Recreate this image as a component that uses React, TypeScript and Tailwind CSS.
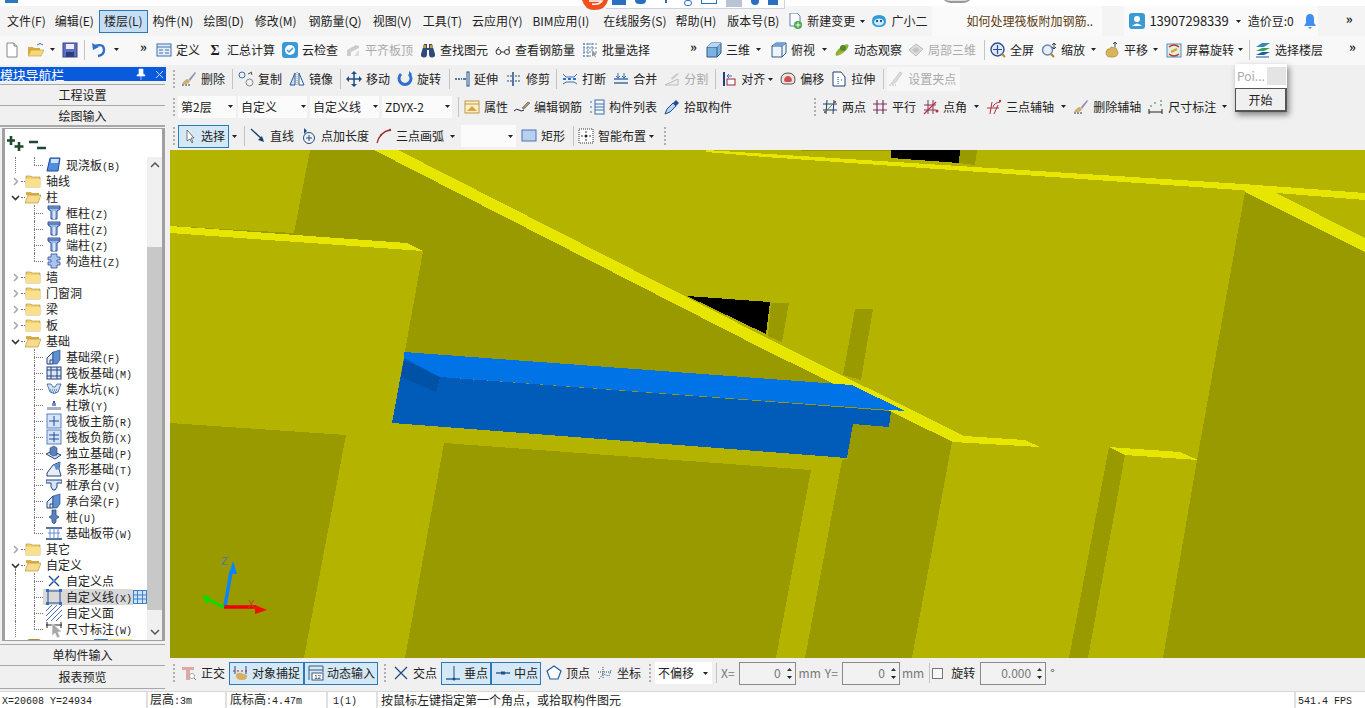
import React from 'react';
import clsx from 'clsx';

const Ic = ({ children }: { children: React.ReactNode }) => (
  <svg width="16" height="16" viewBox="0 0 16 16" className="shrink-0 block">{children}</svg>
);

// toolbar icons
const doc = <Ic><path d="M3 1h7l3 3v11H3z" fill="#fff" stroke="#888" /><path d="M10 1v3h3" fill="#ddd" stroke="#888" /></Ic>;
const openF = <Ic><path d="M0 5h5l1 1h6v8H0z" fill="#d9a93c" /><path d="M3 8h13l-3 6H0z" fill="#f4d77a" stroke="#c39a35" strokeWidth=".6" /><path d="M9 3q3-3 6 0" stroke="#3a6fb0" fill="none" /></Ic>;
const save = <Ic><rect x="1" y="1" width="14" height="14" fill="#5c6fc0" stroke="#3a4790" /><rect x="4" y="2" width="8" height="5" fill="#eef" /><rect x="4" y="10" width="8" height="5" fill="#2e3a80" /></Ic>;
const undo = <Ic><path d="M4 4q9-3 9 4 0 5-6 6" stroke="#2f6fc8" strokeWidth="2.4" fill="none" /><path d="M1 1l1 7 6-3z" fill="#2f6fc8" /></Ic>;
const tableI = <Ic><rect x="1" y="2" width="14" height="12" fill="#e4eefa" stroke="#3b6ea8" /><path d="M1 5h14M3 8h4M3 11h4M9 8h4M9 11h4" stroke="#3b6ea8" /></Ic>;
const sigma = <Ic><text x="8" y="13" textAnchor="middle" fontSize="14" fontWeight="700" fontFamily="Liberation Serif, serif" fill="#222">Σ</text></Ic>;
const cloudCheck = <Ic><rect width="16" height="16" rx="3" fill="#3a9ad9" /><circle cx="8" cy="8" r="5" fill="#fff" /><path d="M5 8l2 2 4-4" stroke="#3a9ad9" strokeWidth="1.5" fill="none" /></Ic>;
const alignG = <Ic><path d="M2 14V8l9-5 3 1v2l-8 4v4z" fill="#ccc" /><path d="M9 14h5V8z" fill="#ddd" /></Ic>;
const binoc = <Ic><path d="M4 2h3v4h2V2h3l3 10a3 3 0 0 1-6 1V8H7v5a3 3 0 0 1-6-1z" fill="#314a7a" /><path d="M4 3h2v3H3z" fill="#c89a3a" /><path d="M10 3h2l1 3h-3z" fill="#c89a3a" /></Ic>;
const glasses = <Ic><circle cx="3.5" cy="10" r="2.5" fill="none" stroke="#333" /><circle cx="12" cy="10" r="2.5" fill="none" stroke="#333" /><path d="M6 10h3.500M1 9l3-4M14 9l0-5" stroke="#333" /></Ic>;
const batch = <Ic><path d="M1 1h14v14H1z" fill="#fff" /><path d="M1 2h14M1 6h14M1 10h14M1 14h8M2 1v14M6 1v14M10 1v8" stroke="#567ca8" strokeDasharray="2 1" /><path d="M10 9l5 3-2 1 1 2-1 .5-1-2-2 1z" fill="#999" /></Ic>;
const cube = <Ic><path d="M1 5l4-4h10v10l-4 4H1z" fill="#7db2e0" stroke="#2d5d8c" /><path d="M1 5h10v10M11 5l4-4" stroke="#2d5d8c" fill="none" /><path d="M1 5l4-4h10l-4 4z" fill="#b8d6f0" /></Ic>;
const cubeT = <Ic><path d="M1 4l4-3h10v10l-4 4H1z" fill="#eef4fa" stroke="#2d5d8c" /><path d="M1 4h10v11M11 4l4-3" stroke="#2d5d8c" fill="none" /><path d="M1 4l4-3h10l-4 3z" fill="#6da5d8" /></Ic>;
const orbit = <Ic><ellipse cx="8" cy="8" rx="8" ry="3" transform="rotate(-40 8 8)" fill="#7fb43a" /><path d="M4 12q6 0 8-9" stroke="#e0a030" strokeWidth="1.500" fill="none" /><circle cx="9" cy="6" r="3" fill="#4d8a2a" /></Ic>;
const cubeG = <Ic><path d="M1 8l7-6 7 5-7 7z" fill="#ddd" stroke="#bbb" /><path d="M4 8l4-3 4 3-4 3z" fill="#c4c4c4" /></Ic>;
const full = <Ic><circle cx="7.500" cy="7.500" r="6.500" fill="#dfe9f8" stroke="#2f4f90" strokeWidth="1.400" /><path d="M7.500 3v9M3 7.500h9" stroke="#2f4f90" strokeWidth="1.200" /><path d="M12 12l3 3" stroke="#b98a2a" strokeWidth="2" /></Ic>;
const zoomI = <Ic><circle cx="6.500" cy="8" r="5" fill="#e6eefa" stroke="#6a86b0" strokeWidth="1.500" /><path d="M10 12l3 3" stroke="#a8862a" strokeWidth="2" /><path d="M13 1v5M11 3l2-2 2 2M11 5l2 2 2-2" stroke="#345" fill="none" /></Ic>;
const pan = <Ic><path d="M2 10q1-4 4-3l1-2 5 1 2 4q0 5-5 5H6q-4 0-4-5z" fill="#d9b45c" stroke="#9a7a2a" strokeWidth=".6" /><path d="M11 0v5M9 2l2-2 2 2" stroke="#345" fill="none" /></Ic>;
const rotS = <Ic><rect x="1" y="2" width="14" height="13" fill="#dff0e0" stroke="#4a8fc0" /><path d="M3 5q5-4 10 0" stroke="#c83030" strokeWidth="1.500" fill="none" /><path d="M3 12q5 4 10 0" stroke="#c83030" strokeWidth="1.500" fill="none" /><path d="M5 10l6-3" stroke="#d8a030" strokeWidth="2" /></Ic>;
const layersI = <Ic><path d="M1 5l6-4h8L9 5z" fill="#2f8fb0" /><path d="M1 9l6-3h8L9 9z" fill="#3ca05a" /><path d="M1 13l6-3h8l-6 3z" fill="#1f5f9f" /><path d="M1 15h13" stroke="#1f5f9f" /></Ic>;
const newDoc = <Ic><path d="M3 0h7l3 3v10H3z" fill="#fff" stroke="#5a7fb0" /><circle cx="11" cy="12" r="4" fill="#4aa84a" /><path d="M11 9.500v5M8.500 12h5" stroke="#fff" /></Ic>;
const robot = <Ic><path d="M1 8q0-6 7-6t7 6q0 6-7 6T1 8z" fill="#2e9ad8" /><ellipse cx="8" cy="9" rx="5" ry="3.500" fill="#c8ecfa" /><circle cx="6" cy="8" r="1" fill="#124" /><circle cx="10" cy="8" r="1" fill="#124" /></Ic>;
const userI = <Ic><rect width="16" height="16" rx="3" fill="#3b9ad0" /><circle cx="8" cy="6" r="3" fill="#fff" /><path d="M3 13q5-5 10 0z" fill="#fff" /></Ic>;
const bell = <Ic><path d="M8 1q4 0 4 5v4l2 3H2l2-3V6q0-5 4-5z" fill="#3f8fee" /><path d="M6 14h4l-2 2z" fill="#3f8fee" /></Ic>;

const brush = <Ic><path d="M1 14h9" stroke="#334" strokeDasharray="2 1" /><path d="M1 13q3-5 6-5l2 2q-2 4-8 3z" fill="#c8b070" /><path d="M8 8l6-7 1 1-6 8z" fill="#9a8ab0" /></Ic>;
const copyI = <Ic><circle cx="4" cy="4" r="3" fill="none" stroke="#3c6ea8" /><circle cx="11.500" cy="11.500" r="3.500" fill="none" stroke="#888" /><path d="M10 3l4-2M13 1l1 3" stroke="#555" fill="none" /></Ic>;
const mirrorI = <Ic><path d="M6 2v12H1z" fill="#cfe0f2" stroke="#1f5a96" /><path d="M10 2v12h5z" fill="#fff" stroke="#1f5a96" /><path d="M8 1v14" stroke="#888" strokeDasharray="1 1" /></Ic>;
const moveI = <Ic><path d="M8 1v14M1 8h14" stroke="#1f4e86" strokeWidth="1.500" /><path d="M8 0l-3 3h6zM8 16l-3-3h6zM0 8l3-3v6zM16 8l-3-3v6z" fill="#1f4e86" /></Ic>;
const rotI = <Ic><path d="M4 3a6 6 0 1 0 8 0" stroke="#2f6fc8" strokeWidth="3" fill="none" /><path d="M12 0v6l3-3z" fill="#2f6fc8" /></Ic>;
const extend = <Ic><path d="M1 8h7" stroke="#1f4e86" strokeDasharray="2 1" strokeWidth="1.500" /><path d="M9 8h3" stroke="#1f4e86" strokeWidth="1.500" /><rect x="13" y="1" width="2" height="14" fill="#fff" stroke="#1f4e86" /></Ic>;
const trim = <Ic><path d="M1 5h5M1 10h5M9 5h5M9 10h5" stroke="#1f4e86" strokeDasharray="2 1" /><path d="M7 1v14" stroke="#1f4e86" strokeWidth="1.500" /></Ic>;
const breakI = <Ic><path d="M1 3l3 3h8l3-3M1 13l3-2h8l3 2" stroke="#3c6ea8" fill="none" /><path d="M1 8h14" stroke="#2f6fc8" strokeDasharray="3 2" strokeWidth="2" /></Ic>;
const mergeI = <Ic><path d="M5 2v4M11 2v4" stroke="#3c6ea8" /><path d="M1 8h14M1 12h14" stroke="#3c6ea8" strokeWidth="1.500" /><path d="M3 5l2 2 2-2M9 5l2 2 2-2" stroke="#3c6ea8" fill="none" /></Ic>;
const splitI = <Ic><path d="M1 14l13-6v6z" fill="#eee" stroke="#bbb" /><path d="M7 7l6-5 2 1-7 6z" fill="#ccc" /></Ic>;
const alignI = <Ic><rect x="2" y="1" width="2" height="14" fill="#1f3f80" /><rect x="6" y="8" width="8" height="6" fill="#fff" stroke="#a02040" /><path d="M11 5H6M8 3L6 5l2 2" stroke="#2f6fc8" fill="none" /></Ic>;
const offsetI = <Ic><path d="M8 2q7 0 7 7 0 4-3 4H4q-3 0-3-4 0-7 7-7z" fill="#f0e0e0" stroke="#555" /><path d="M4 9q1-4 4-4t4 4q0 2-2 2H6q-2 0-2-2z" fill="#d05050" /></Ic>;
const stretch = <Ic><path d="M2 1h8l4 5v9H2z" fill="#fff" stroke="#1f3f70" /><path d="M7 6v7M10 9h2" stroke="#1f3f70" strokeDasharray="1 1" /></Ic>;
const gripG = <Ic><path d="M1 14h7" stroke="#bbb" strokeDasharray="2 1" /><path d="M3 13l3-4 6-8 2 1-6 9z" fill="#ddd" stroke="#ccc" /></Ic>;

const propI = <Ic><rect x="1" y="2" width="14" height="12" fill="#fbeecb" stroke="#c09840" /><path d="M1 5h14" stroke="#c09840" /><path d="M3 12l5-5 5 5z" fill="#e0a040" /></Ic>;
const editBar = <Ic><path d="M0 12q3-3 5-1t5 0" stroke="#223" fill="none" /><path d="M8 9l6-6 2 1-6 6z" fill="#a89470" stroke="#443" strokeWidth=".5" /></Ic>;
const listI = <Ic><rect x="6" y="1" width="9" height="14" fill="#f4f8fc" stroke="#3c6ea8" /><path d="M6 5h9M6 8h9M6 11h9M1 3h2M1 8h2M1 13h2" stroke="#3c6ea8" /></Ic>;
const pick = <Ic><path d="M1 15l2-5 6-6 3 3-6 6z" fill="#b8d4f4" stroke="#1f4e96" /><path d="M9 4l3-3 3 3-3 3z" fill="#1f4e96" /></Ic>;
const twoPt = <Ic><path d="M1 5h14M1 11h14M5 1l-1 14M12 1l-1 14" stroke="#1f3f70" /><path d="M2 14L14 2" stroke="#6a8a30" /><circle cx="3" cy="13" r="1" fill="#c03030" /><circle cx="13" cy="3" r="1" fill="#c03030" /></Ic>;
const parallel = <Ic><path d="M1 5h14M1 11h14M5 1v14M11 1v14" stroke="#803060" strokeWidth="1.200" /></Ic>;
const ptAngle = <Ic><path d="M1 6h12M1 11h12M5 1v14M10 1v14" stroke="#803060" /><path d="M1 15L13 3" stroke="#c03040" strokeWidth="1.300" /><circle cx="14" cy="12" r="1.500" fill="#c03030" /></Ic>;
const threeAx = <Ic><path d="M1 9h12M6 3l-2 12M12 6l-4 9" stroke="#b03040" /><path d="M7 8q1-4 7-5" stroke="#b03040" fill="none" /><circle cx="14" cy="2" r="1.200" fill="#c03030" /></Ic>;
const dim = <Ic><path d="M1 10v5M14 10v5M1 13h13" stroke="#222" /><path d="M2 7h2M12 2h2M12 6h2M6 4h2" stroke="#3a8040" strokeDasharray="2 1" /></Ic>;

const cursorI = <Ic><path d="M5 2v11l3-2 2 4 1-1-2-4h3z" fill="#fff" stroke="#777" /></Ic>;
const lineI = <Ic><path d="M1 1l12 11" stroke="#1f3f70" strokeWidth="1.300" /><path d="M14 14l-6-2 4-4z" fill="#1f3f70" /></Ic>;
const ptLen = <Ic><circle cx="8" cy="10" r="5.500" fill="none" stroke="#1f4e86" /><path d="M8 7v6M5 10h6" stroke="#1f4e86" /><path d="M3 0v6l3-3z" fill="#1f4e86" /></Ic>;
const arcI = <Ic><path d="M1 15Q4 4 14 2" stroke="#a03030" strokeWidth="1.300" fill="none" /><circle cx="14" cy="2" r="1.200" fill="#a03030" /><circle cx="5" cy="7" r="1" fill="#a03030" /></Ic>;
const rectI = <Ic><rect x="1" y="2" width="14" height="11" fill="#b8d0f0" stroke="#4a74b0" /></Ic>;
const smart = <Ic><rect x="1" y="1" width="14" height="14" fill="#fff" stroke="#333" strokeDasharray="1 1" /><path d="M3 8h10M8 3v10" stroke="#345" strokeDasharray="2 2" /><circle cx="8" cy="8" r="1.500" fill="#222" /></Ic>;

const ortho = <Ic><path d="M1 2h12v3H9v10H5V5H1z" fill="#dca8a8" /><circle cx="11" cy="11" r="2.500" fill="#fff" stroke="#aaa" /><path d="M13 13l2 2" stroke="#888" /></Ic>;
const snap = <Ic><path d="M2 1v8M13 1v8" stroke="#1f4e86" /><path d="M0 6h15" stroke="#a03030" strokeDasharray="2 2" /><path d="M3 11q0-4 5-3l6 2q1 5-5 5t-6-4z" fill="#d8b060" /></Ic>;
const dynI = <Ic><path d="M1 1h14M1 5h14M1 1v14M15 1v6" stroke="#3a5a80" fill="none" /><rect x="4" y="8" width="11" height="7" fill="#fff" stroke="#3a5a80" /><text x="9.500" y="14" textAnchor="middle" fontSize="6" fontFamily="Liberation Sans, sans-serif" fill="#223">12</text></Ic>;
const crossI = <Ic><path d="M2 2l12 12M14 2L2 14" stroke="#1f4e86" strokeWidth="1.300" /></Ic>;
const perp = <Ic><path d="M1 14h14" stroke="#1f4e86" strokeWidth="1.300" /><path d="M9 1v12" stroke="#1f4e86" /><circle cx="9" cy="14" r="1.500" fill="#1f4e86" /></Ic>;
const mid = <Ic><path d="M1 8h14" stroke="#1f4e86" strokeWidth="1.300" /><rect x="6" y="6.500" width="4" height="3" fill="#1f4e86" /></Ic>;
const vertexI = <Ic><path d="M8 1l7 5-3 8H4L1 6z" fill="#fff" stroke="#2060a0" strokeWidth="1.200" /></Ic>;
const coordI = <Ic><path d="M2 14l4-5 6 2 2-6" stroke="#3a8aa0" strokeDasharray="1.500 1" fill="none" /><path d="M6 2v12M1 7h14" stroke="#345" strokeDasharray="1 1" /></Ic>;

// tree icons
const folder = <Ic><path d="M1 3h5l1 1h8v10H1z" fill="#f2d069" stroke="#a98a35" strokeWidth=".6" /><path d="M1 6h14v8H1z" fill="#f9e08c" /></Ic>;
const folderO = <Ic><path d="M1 3h5l1 1h7v2H1z" fill="#d9ae4a" /><path d="M3 6h13l-3 8H0z" fill="#f6dc88" stroke="#a98a35" strokeWidth=".6" /></Ic>;
const slab = <Ic><path d="M4 1h10l-2 13H1z" fill="#4f8ee0" stroke="#204a90" /><path d="M5 2h8l-1 4H5z" fill="#cfe2fa" /></Ic>;
const colT = <Ic><path d="M2 1h12v3l-3 2v8H5V6L2 4z" fill="#9cb8ea" stroke="#2a4f96" /><path d="M2 3h12" stroke="#2a4f96" /><path d="M7 6h2v8H7z" fill="#dbe6fa" /></Ic>;
const colS = <Ic><path d="M5 1h6v3h3v3h-3v2h3v3h-3v3H5v-3H2V9h3V7H2V4h3z" fill="#a9c2ee" stroke="#2a4f96" strokeWidth=".8" /></Ic>;
const beamI = <Ic><path d="M1 15V9l6-6v12z" fill="#e0e8f6" stroke="#23447f" /><path d="M7 3l7-2v10l-3 4H7z" fill="#5e8fd0" stroke="#23447f" strokeWidth=".6" /><path d="M4 15v-4h3" stroke="#23447f" fill="none" /></Ic>;
const raftI = <Ic><rect x="1" y="2" width="14" height="12" fill="#dbe6f8" stroke="#23447f" /><path d="M1 5h14M1 11h14M5 2v12M11 2v12" stroke="#23447f" /></Ic>;
const pit = <Ic><path d="M1 3h4l2 3h2l2-3h4l-3 8q-4 3-8 0z" fill="#cfe2f6" stroke="#335a92" strokeWidth=".8" /><path d="M4 9h8M5 11h6" stroke="#335a92" strokeDasharray="1 1" /></Ic>;
const pier = <Ic><path d="M6 6h4v3H6z" fill="#6f8fc8" /><path d="M7 4h2v2H7z" fill="#335a92" /><rect x="1" y="10" width="14" height="3" fill="#aab0c0" /></Ic>;
const rebarP = <Ic><rect x="1" y="1" width="14" height="14" fill="#d4e4fa" stroke="#5a82c0" /><path d="M8 3v10M3 8h10" stroke="#234a90" /></Ic>;
const rebarN = <Ic><rect x="1" y="1" width="14" height="14" fill="#d4e4fa" stroke="#5a82c0" /><path d="M3 6h10M8 3v10M3 10h10" stroke="#234a90" /></Ic>;
const isoI = <Ic><path d="M0 9l6-3 9 4-6 4z" fill="#d0def4" stroke="#23447f" /><path d="M4 3l4-2 3 2v7l-4 1-3-2z" fill="#5e80ba" stroke="#23447f" strokeWidth=".6" /></Ic>;
const stripI = <Ic><path d="M1 15v-3l6-8 7-3-1 7 2 7z" fill="#e8eef8" stroke="#23447f" /><path d="M8 4l6-3-1 7-3 1z" fill="#5e8fd0" /></Ic>;
const capI = <Ic><path d="M0 3h16v3H11v4l-2 3H7l-2-3V6H0z" fill="#d6e2f6" stroke="#23447f" /></Ic>;
const pile = <Ic><path d="M6 1h4v5l3 2-3 2v3l-2 2-2-2v-3L3 8l3-2z" fill="#5e80ba" stroke="#23447f" strokeWidth=".7" /></Ic>;
const band = <Ic><path d="M0 3h16M0 14h16" stroke="#23447f" strokeWidth="1.500" /><path d="M4 3v11M8 3v11M12 3v11M2 8h12" stroke="#5e8fd0" /></Ic>;
const ptX = <Ic><path d="M3 3l10 10M13 3L3 13" stroke="#23447f" strokeWidth="1.400" /><circle cx="8" cy="8" r="1.500" fill="#4a8fe0" /></Ic>;
const lineSq = <Ic><rect x="2" y="2" width="12" height="12" fill="none" stroke="#234a90" /><path d="M0 0h3v3H0zM13 0h3v3h-3zM0 13h3v3H0zM13 13h3v3h-3z" fill="#2f6fc8" /></Ic>;
const hatch = <Ic><path d="M0 6L6 0M0 11L11 0M0 16L16 0M5 16L16 5M10 16l6-6" stroke="#4a6fa8" /></Ic>;
const dimT = <Ic><path d="M0 4h16M1 1v6M15 1v6" stroke="#222" /></Ic>;

const Caret = ({ className }: { className?: string }) => (
  <svg width="5" height="3" viewBox="0 0 5 3" className={clsx('shrink-0 block', className)}><path d="M0 0h5L2.500 3z" fill="#222" /></svg>
);
const Sep = ({ className }: { className?: string }) => <div className={clsx('w-px h-[20px] shrink-0 bg-[#c4c4c4]', className)} />;
const Grip = ({ className }: { className?: string }) => <div className={clsx('w-[2px] h-[18px] shrink-0 border-l-2 border-dotted border-[#b0b0b0]', className)} />;
const More = ({ className }: { className?: string }) => <span className={clsx('text-[13px] font-bold leading-none -mt-[6px] shrink-0 text-[#222]', className)}>»</span>;

function T({ icon, label, className, gray }: { icon: React.ReactNode; label: string; className?: string; gray?: boolean }) {
  return (
    <div className={clsx('flex items-center shrink-0', className)}>
      {icon}
      <span className={clsx('ml-1 whitespace-nowrap', gray ? 'text-[#aaaaaa]' : 'text-[#222]')}>{label}</span>
    </div>
  );
}

function Combo({ label, className, caret }: { label: string; className?: string; caret?: string }) {
  return (
    <div className={clsx('flex items-center h-[22px] shrink-0 bg-[#fbfbfb] pl-[3px]', className)}>
      <span className="whitespace-nowrap text-[#222]">{label}</span>
      <Caret className={clsx('ml-auto', caret)} />
    </div>
  );
}

function Active({ icon, label, className }: { icon: React.ReactNode; label: string; className?: string }) {
  return (
    <div className={clsx('flex items-center h-[23px] shrink-0 bg-[#d4e8f6] border border-[#2a7ab8] pl-[3px]', className)}>
      {icon}
      <span className="ml-[3px] whitespace-nowrap text-[#222]">{label}</span>
    </div>
  );
}

function Num({ value, className }: { value: string; className?: string }) {
  return (
    <div className={clsx('flex items-center h-[23px] shrink-0 border border-[#8a8a8a] bg-[#f2f2f2] pr-[3px]', className)}>
      <span className="ml-auto text-[#777]">{value}</span>
      <div className="flex flex-col gap-[5px] ml-[6px]">
        <svg width="5" height="3" viewBox="0 0 5 3" className="block"><path d="M0 3h5L2.500 0z" fill="#333" /></svg>
        <Caret />
      </div>
    </div>
  );
}

// latin text of the old tree/status font is narrower than what we have at 12px
function Mixed({ text }: { text: string }) {
  const parts = text.split(/([\x20-\x7e]+)/).filter(Boolean);
  return (
    <span className="whitespace-nowrap text-[#222] leading-none">
      {parts.map((p, i) =>
        /^[\x20-\x7e]+$/.test(p) ? (
          <span key={i} className="font-['Liberation_Mono',monospace] text-[10px]">{p}</span>
        ) : (
          <span key={i} className="text-[12px]">{p}</span>
        )
      )}
    </span>
  );
}

function Folder({ label, open, line }: { label: string; open?: boolean; line?: boolean }) {
  return (
    <div className="relative flex items-center h-4 shrink-0">
      <svg width="9" height="9" viewBox="0 0 9 9" className="ml-[6px] shrink-0 block">
        {open ? <path d="M1 3l3.500 3.500L8 3" stroke="#333" strokeWidth="1.600" fill="none" /> : <path d="M3 1l3.500 3.500L3 8" stroke="#aaa" strokeWidth="1.600" fill="none" />}
      </svg>
      <div className="ml-[1px] w-[4px] border-t border-dotted border-[#777]" />
      {open ? folderO : folder}
      <span className="ml-[5px]"><Mixed text={label} /></span>
      {line && <div className="absolute left-[10px] top-[12px] h-[4px] border-l border-dotted border-[#777]" />}
    </div>
  );
}

function Leaf({ icon, label, line, last, selected }: { icon: React.ReactNode; label: string; line?: boolean; last?: boolean; selected?: boolean }) {
  return (
    <div className="relative flex items-center h-4 shrink-0">
      {line && <div className="absolute left-[10px] top-0 bottom-0 border-l border-dotted border-[#777]" />}
      <div className={clsx('absolute left-[29px] top-0 border-l border-dotted border-[#777]', last ? 'h-2' : 'h-4')} />
      <div className="ml-[29px] w-[9px] border-t border-dotted border-[#777]" />
      <div className={clsx('flex items-center h-4 pl-[3px]', selected && 'bg-[#d9d9d9]')}>
        {icon}
        <span className="ml-1 pr-[1px]"><Mixed text={label} /></span>
      </div>
      {selected && (
        <svg width="14" height="14" viewBox="0 0 14 14" className="block shrink-0">
          <rect x=".5" y=".5" width="13" height="13" fill="#cfe4fa" stroke="#3f7fc8" />
          <path d="M4.500 1v12M9.500 1v12M1 5h12M1 9h12" stroke="#3f7fc8" />
        </svg>
      )}
    </div>
  );
}

function Scrollbar() {
  return (
    <div className="flex flex-col items-center w-[15px] shrink-0 bg-[#f0f0f0]">
      <svg width="10" height="6" viewBox="0 0 10 6" className="mt-[5px] block"><path d="M1 5l4-4 4 4" stroke="#555" strokeWidth="1.500" fill="none" /></svg>
      <div className="w-full h-[363px] mt-[79px] bg-[#c8c8c8]" />
      <svg width="10" height="6" viewBox="0 0 10 6" className="mt-[19px] block"><path d="M1 1l4 4 4-4" stroke="#555" strokeWidth="1.500" fill="none" /></svg>
    </div>
  );
}

function NavBtn({ label, className }: { label: string; className?: string }) {
  return (
    <div className={clsx('flex items-center justify-center w-[165px] bg-[#f0f0f0] border-b border-[#a8a8a8] text-[#222]', className)}>{label}</div>
  );
}

function LeftPanel() {
  return (
    <div className="relative flex flex-col w-[170px] shrink-0 pt-[2px]">
      <div className="flex items-center h-[14px] w-[166px] bg-[#0a5ade] text-white">
        <span className="text-[13px] leading-none tracking-[-0.2px]">模块导航栏</span>
        <svg width="10" height="12" viewBox="0 0 10 12" className="ml-[72px] block"><path d="M3 1h4v5l2 1v1H1V7l2-1zM5 8v4" fill="#fff" stroke="#fff" strokeWidth=".6" /></svg>
        <svg width="9" height="9" viewBox="0 0 9 9" className="ml-[9px] block"><path d="M1 1l7 7M8 1L1 8" stroke="#cfe0ff" /></svg>
      </div>
      <NavBtn label="工程设置" className="h-[22px] mt-[3px] border-t" />
      <NavBtn label="绘图输入" className="h-[21px] border-b-2" />
      <div className="relative flex flex-col w-[163px] h-[513px] ml-[2px] mt-px bg-white border-x-[3px] border-y border-[#a0a0a0] overflow-hidden">
        <div className="flex items-center h-[28px] shrink-0 pl-[1px]">
          <svg width="18" height="15" viewBox="0 0 18 15" className="block"><path d="M5 0v9M1 4.500h8M13 6v9M8.500 10.500h9" stroke="#1f4a30" strokeWidth="2.600" /></svg>
          <svg width="17" height="10" viewBox="0 0 17 10" className="ml-[5px] mt-[3px] block"><path d="M0 2h9M8 8h9" stroke="#1f4a30" strokeWidth="2.600" /></svg>
        </div>
        <div className="flex flex-1 min-h-0">
          <div className="flex flex-col flex-1 min-w-0 overflow-hidden">
            <Leaf icon={slab} label="现浇板(B)" line last />
            <Folder label="轴线" />
            <Folder label="柱" open />
            <Leaf icon={colT} label="框柱(Z)" />
            <Leaf icon={colT} label="暗柱(Z)" />
            <Leaf icon={colT} label="端柱(Z)" />
            <Leaf icon={colS} label="构造柱(Z)" last />
            <Folder label="墙" />
            <Folder label="门窗洞" />
            <Folder label="梁" />
            <Folder label="板" />
            <Folder label="基础" open />
            <Leaf icon={beamI} label="基础梁(F)" />
            <Leaf icon={raftI} label="筏板基础(M)" />
            <Leaf icon={pit} label="集水坑(K)" />
            <Leaf icon={pier} label="柱墩(Y)" />
            <Leaf icon={rebarP} label="筏板主筋(R)" />
            <Leaf icon={rebarN} label="筏板负筋(X)" />
            <Leaf icon={isoI} label="独立基础(P)" />
            <Leaf icon={stripI} label="条形基础(T)" />
            <Leaf icon={capI} label="桩承台(V)" />
            <Leaf icon={beamI} label="承台梁(F)" />
            <Leaf icon={pile} label="桩(U)" />
            <Leaf icon={band} label="基础板带(W)" last />
            <Folder label="其它" />
            <Folder label="自定义" open line />
            <Leaf icon={ptX} label="自定义点" line />
            <Leaf icon={lineSq} label="自定义线(X)" line selected />
            <Leaf icon={hatch} label="自定义面" line />
            <Leaf icon={dimT} label="尺寸标注(W)" line last />
            {/* next row is scrolled almost out of sight, only its top shows */}
            <div className="flex items-start h-4 shrink-0 pl-[22px] pt-[2px]">
              <div className="w-[14px] h-[3px] rounded-t-full border-t border-x border-[#a98a35] bg-[#f2d069]" />
              <div className="ml-[53px] w-[14px] h-[3px] border-t border-x border-[#3f7fc8] bg-[#cfe4fa]" />
              <div className="ml-[2px] w-[22px] h-[3px] bg-[#f5e26a]" />
            </div>
          </div>
          <Scrollbar />
        </div>
        {/* mouse pointer left on the tree */}
        <svg width="12" height="16" viewBox="0 0 12 16" className="absolute left-[46px] top-[494px] block">
          <path d="M1 0v13l3-3 2 5 3-1-2-5h4z" fill="#a8a8a8" stroke="#fff" strokeWidth=".6" />
        </svg>
      </div>
      <NavBtn label="单构件输入" className="h-[22px] mt-[3px] border-t" />
      <NavBtn label="报表预览" className="h-[23px]" />
    </div>
  );
}

function Model() {
  return (
    <svg viewBox="170 150 1195 508" width="1195" height="508" shapeRendering="crispEdges" className="block shrink-0">
      <rect x="170" y="150" width="1195" height="508" fill="#999900" />
      {/* upper slab and right-hand pieces */}
      <polygon points="398,150 1245,150 1245,192 1197,460 1163,658 912,658 952,442 964,436 765,337" fill="#b3b300" />
      <polygon points="1245,150 1365,150 1365,238 1274,192 1245,192" fill="#b3b300" />
      <polygon points="170,150 310,150 294,233 170,226" fill="#b3b300" />
      <polygon points="170,233 423,251 392,423 850,458 842,460 805,658 776,658 811,470 444,443 405,658 304,658 346,435 170,423" fill="#b3b300" />
      {/* openings and recesses */}
      <polygon points="687,296 770,302 766,334" fill="#000" />
      <polygon points="771,303 789,303 782,342 768,336" fill="#999900" />
      <polygon points="855,309 873,309 861,380 843,375" fill="#999900" />
      <polygon points="801,150 891,150 891,151 801,151" fill="#999900" />
      <polygon points="891,150 960,150 959,163 891,158" fill="#000" />
      <polygon points="960,150 977,150 975,165 959,163" fill="#999900" />
      <polygon points="1109,447 1125,455 1088,658 1069,658" fill="#999900" />
      {/* yellow top faces */}
      <polygon points="170,226 407,243 423,251 170,233" fill="#e6e600" />
      <polygon points="374,150 398,150 765,337 964,436 1025,440 1040,447 953,442 765,350" fill="#e6e600" />
      <polygon points="706,150 1243,184 1365,193 1365,200 1239,190 765,157 706,152" fill="#e6e600" />
      <polygon points="1241,187 1274,192 1365,238 1365,252 1245,192" fill="#e6e600" />
      <polygon points="1109,447 1180,452 1198,460 1125,455" fill="#e6e600" />
      {/* blue beam */}
      <polygon points="404,358 440,377 891,411 889,427 853,424 847,458 392,423" fill="#005cb8" />
      <polygon points="404,360 440,377 436,392 401,377" fill="#0052a6" />
      <polygon points="404,352 852,385 905,411 440,377 404,358" fill="#0073e6" />
      {/* axis gizmo */}
      <g shapeRendering="auto">
        <path d="M225 606L231 572" stroke="#0a84ff" strokeWidth="3.500" />
        <path d="M233 561l-4 13h8z" fill="#0a84ff" />
        <path d="M224 607h32" stroke="#f00000" strokeWidth="3.500" />
        <path d="M267 610l-12-5v9z" fill="#f01000" />
        <path d="M224 607l-17-8" stroke="#00e000" strokeWidth="3" />
        <path d="M202 595l5 9 3-7z" fill="#00e000" />
        <text x="221" y="565" fontSize="11" fill="#4a78a8" fontFamily="Liberation Sans, sans-serif">Z</text>
        <text x="248" y="608" fontSize="10" fill="#c04020" fontFamily="Liberation Sans, sans-serif">X</text>
      </g>
    </svg>
  );
}

function TopRow() {
  return (
    <div className="flex items-center h-[30px] shrink-0 bg-[#f4f4f4] pl-[2px]">
      <div className="flex items-center h-[23px] pl-[5px] pr-[4px]">文件(F)</div>
      <div className="flex items-center h-[23px] px-[5px]">编辑(E)</div>
      <div className="flex items-center h-[23px] px-[4px] bg-[#c5def5] border border-[#2a7ab8]">楼层(L)</div>
      <div className="flex items-center h-[23px] px-[5px]">构件(N)</div>
      <div className="flex items-center h-[23px] px-[5px]">绘图(D)</div>
      <div className="flex items-center h-[23px] px-[5px] ml-[1px]">修改(M)</div>
      <div className="flex items-center h-[23px] px-[5px] ml-[2px]">钢筋量(Q)</div>
      <div className="flex items-center h-[23px] px-[5px] ml-[1px]">视图(V)</div>
      <div className="flex items-center h-[23px] px-[5px] ml-[1px]">工具(T)</div>
      <div className="flex items-center h-[23px] px-[5px]">云应用(Y)</div>
      <div className="flex items-center h-[23px] px-[5px]">BIM应用(I)</div>
      <div className="flex items-center h-[23px] pl-[5px] pr-[3px] ml-[4px]">在线服务(S)</div>
      <div className="flex items-center h-[23px] px-[5px] ml-[1px]">帮助(H)</div>
      <div className="flex items-center h-[23px] px-[5px] ml-[1px]">版本号(B)</div>
      <T icon={newDoc} label="新建变更" className="ml-[3px]" />
      <Caret className="ml-[5px]" />
      <T icon={robot} label="广小二" className="ml-[6px]" />
      <div className="flex items-center h-[30px] ml-[5px] pl-[34px] w-[170px] bg-[#fafafa] text-[#5a3a10] whitespace-nowrap">如何处理筏板附加钢筋..</div>
      <div className="flex items-center h-[30px] ml-[22px] pl-[5px] bg-[#fafafa]">
        {userI}
        <span className="ml-[4px] text-[13px] text-[#222]">13907298339</span>
        <Caret className="ml-[7px]" />
        <span className="ml-[7px] text-[#222] whitespace-nowrap">造价豆:0</span>
        <span className="ml-[8px]">{bell}</span>
      </div>
      <More className="ml-[28px]" />
    </div>
  );
}

function MainBar() {
  return (
    <div className="flex items-center h-[29px] shrink-0 bg-[#f8f8f8] pl-[4px] pb-[2px]">
      {doc}
      <span className="ml-[8px]">{openF}</span>
      <Caret className="ml-[6px]" />
      <span className="ml-[7px]">{save}</span>
      <Sep className="ml-[6px]" />
      <span className="ml-[6px]">{undo}</span>
      <Caret className="ml-[7px]" />
      <More className="ml-[21px]" />
      <T icon={tableI} label="定义" className="ml-[9px]" />
      <T icon={sigma} label="汇总计算" className="ml-[7px]" />
      <T icon={cloudCheck} label="云检查" className="ml-[7px]" />
      <T icon={alignG} label="平齐板顶" className="ml-[7px]" gray />
      <T icon={binoc} label="查找图元" className="ml-[7px]" />
      <T icon={glasses} label="查看钢筋量" className="ml-[7px]" />
      <T icon={batch} label="批量选择" className="ml-[7px]" />
      <More className="ml-[40px]" />
      <T icon={cube} label="三维" className="ml-[9px]" />
      <Caret className="ml-[6px]" />
      <T icon={cubeT} label="俯视" className="ml-[10px]" />
      <Caret className="ml-[7px]" />
      <T icon={orbit} label="动态观察" className="ml-[7px]" />
      <T icon={cubeG} label="局部三维" className="ml-[6px]" gray />
      <Sep className="ml-[8px]" />
      <T icon={full} label="全屏" className="ml-[5px]" />
      <T icon={zoomI} label="缩放" className="ml-[7px]" />
      <Caret className="ml-[6px]" />
      <T icon={pan} label="平移" className="ml-[8px]" />
      <Caret className="ml-[5px]" />
      <T icon={rotS} label="屏幕旋转" className="ml-[8px]" />
      <Caret className="ml-[4px]" />
      <Sep className="ml-[6px]" />
      <T icon={layersI} label="选择楼层" className="ml-[5px]" />
      <More className="ml-[26px]" />
    </div>
  );
}

export default function App() {
  return (
    <div className="relative flex flex-col w-[1365px] h-[708px] overflow-hidden bg-[#f0f0f0] text-[12px] text-[#222] font-['Noto_Sans_CJK_SC',sans-serif]">
      {/* title strip, mostly cropped away */}
      <div className="relative h-[6px] shrink-0 bg-white">
        <div className="absolute left-[5px] top-0 w-[13px] h-[3px] bg-[#2a78c0]" />
        <div className="absolute left-[606px] top-0 flex items-start gap-[9px] w-[179px] h-[9px] bg-white border-b border-r border-[#c8d4e4] pl-[6px] overflow-hidden z-10">
          <div className="w-[14px] h-[5px] bg-[#2a6ec0]" />
          <div className="w-[11px] h-[4px] rounded-b-full bg-[#2a6ec0]" />
          <div className="ml-[10px] w-[2px] h-[3px] bg-[#2a6ec0]" />
          <div className="ml-[8px] w-[8px] h-[6px] rounded-full border border-[#2a6ec0]" />
          <div className="w-[16px] h-[4px] border-x border-b border-[#2a6ec0]" />
          <div className="w-[16px] h-[7px] bg-[#b8c4d4]" />
          <div className="w-[8px] h-[5px] rounded-b bg-[#2a6ec0]" />
          <div className="w-[10px] h-[5px] bg-[#2a6ec0]" />
        </div>
        <svg width="26" height="11" viewBox="0 0 26 11" className="absolute left-[582px] top-0 block z-20"><path d="M0 0h26q-2 10-14 10Q3 10 0 0z" fill="#f0501e" /><path d="M7 1h13q-3 4-10 3" stroke="#fff" strokeWidth="1.500" fill="none" /></svg>
        <div className="absolute left-[942px] -top-[14px] w-[30px] h-[17px] rounded-full bg-[#ddd] border-b-2 border-[#999]" />
      </div>
      <TopRow />
      <MainBar />
      <div className="flex flex-1 min-h-0">
        <LeftPanel />
        <div className="flex flex-col w-[1195px] shrink-0">
          {/* edit bar */}
          <div className="flex items-center h-[28px] shrink-0 pl-[3px]">
            <Grip />
            <T icon={brush} label="删除" className="ml-[6px]" />
            <Sep className="ml-[7px]" />
            <T icon={copyI} label="复制" className="ml-[5px]" />
            <T icon={mirrorI} label="镜像" className="ml-[7px]" />
            <Sep className="ml-[7px]" />
            <T icon={moveI} label="移动" className="ml-[5px]" />
            <T icon={rotI} label="旋转" className="ml-[7px]" />
            <Sep className="ml-[8px]" />
            <T icon={extend} label="延伸" className="ml-[4px]" />
            <T icon={trim} label="修剪" className="ml-[8px]" />
            <Sep className="ml-[6px]" />
            <T icon={breakI} label="打断" className="ml-[5px]" />
            <T icon={mergeI} label="合并" className="ml-[7px]" />
            <T icon={splitI} label="分割" className="ml-[7px]" gray />
            <Sep className="ml-[7px]" />
            <T icon={alignI} label="对齐" className="ml-[5px]" />
            <Caret className="ml-[3px]" />
            <T icon={offsetI} label="偏移" className="ml-[7px]" />
            <T icon={stretch} label="拉伸" className="ml-[7px]" />
            <Sep className="ml-[8px]" />
            <div className="flex items-center h-[24px] ml-[3px] pl-px pr-[4px] bg-[#f7f7f7]">
              <T icon={gripG} label="设置夹点" gray />
            </div>
          </div>
          {/* selection bar */}
          <div className="flex items-center h-[29px] shrink-0 pl-[3px] pb-[2px]">
            <Grip />
            <Combo label="第2层" className="ml-[3px] w-[58px]" caret="mr-[3px]" />
            <Combo label="自定义" className="ml-[2px] w-[69px]" caret="mr-[1px]" />
            <Combo label="自定义线" className="ml-[3px] w-[69px]" caret="mr-[1px]" />
            <Combo label="ZDYX-2" className="ml-[3px] w-[70px]" caret="mr-[2px]" />
            <Sep className="ml-[6px]" />
            <T icon={propI} label="属性" className="ml-[5px]" />
            <T icon={editBar} label="编辑钢筋" className="ml-[6px]" />
            <T icon={listI} label="构件列表" className="ml-[7px]" />
            <T icon={pick} label="拾取构件" className="ml-[7px]" />
            <Grip className="ml-[82px]" />
            <T icon={twoPt} label="两点" className="ml-[6px]" />
            <T icon={parallel} label="平行" className="ml-[6px]" />
            <T icon={ptAngle} label="点角" className="ml-[7px]" />
            <Caret className="ml-[7px]" />
            <T icon={threeAx} label="三点辅轴" className="ml-[7px]" />
            <Caret className="ml-[7px]" />
            <T icon={brush} label="删除辅轴" className="ml-[7px]" />
            <T icon={dim} label="尺寸标注" className="ml-[7px]" />
            <Caret className="ml-[6px]" />
          </div>
          {/* draw bar */}
          <div className="flex items-center h-[28px] shrink-0 pl-[3px]">
            <Grip />
            <Active icon={cursorI} label="选择" className="ml-[3px] w-[51px]" />
            <Caret className="ml-[3px]" />
            <Sep className="ml-[7px]" />
            <T icon={lineI} label="直线" className="ml-[5px]" />
            <T icon={ptLen} label="点加长度" className="ml-[7px]" />
            <T icon={arcI} label="三点画弧" className="ml-[7px]" />
            <Caret className="ml-[6px]" />
            <Combo label="" className="ml-[6px] w-[55px]" caret="mr-[3px]" />
            <T icon={rectI} label="矩形" className="ml-[5px]" />
            <Sep className="ml-[8px]" />
            <T icon={smart} label="智能布置" className="ml-[4px]" />
            <Caret className="ml-[3px]" />
            <Grip className="ml-[10px]" />
          </div>
          <Model />
          {/* snap bar */}
          <div className="flex items-center h-[30px] shrink-0 pl-[3px]">
            <Grip />
            <T icon={ortho} label="正交" className="ml-[6px]" />
            <Active icon={snap} label="对象捕捉" className="ml-[4px] w-[75px]" />
            <Active icon={dynI} label="动态输入" className="w-[74px]" />
            <Grip className="ml-[6px]" />
            <T icon={crossI} label="交点" className="ml-[7px]" />
            <Active icon={perp} label="垂点" className="ml-[4px] w-[50px]" />
            <Active icon={mid} label="中点" className="w-[50px]" />
            <T icon={vertexI} label="顶点" className="ml-[5px]" />
            <T icon={coordI} label="坐标" className="ml-[7px]" />
            <Grip className="ml-[8px]" />
            <Combo label="不偏移" className="ml-[4px] w-[57px] bg-white" caret="mr-[4px]" />
            <Sep className="ml-[4px]" />
            <span className="ml-[4px] text-[#777]">X=</span>
            <Num value="0" className="ml-[4px] w-[57px]" />
            <span className="ml-[3px] text-[#777]">mm</span>
            <span className="ml-[4px] text-[#777]">Y=</span>
            <Num value="0" className="ml-[4px] w-[58px]" />
            <span className="ml-[2px] text-[#777]">mm</span>
            <Sep className="ml-[5px]" />
            <div className="ml-[2px] w-[11px] h-[11px] shrink-0 border border-[#777] bg-[#f8f8f8]" />
            <span className="ml-[8px]">旋转</span>
            <Num value="0.000" className="ml-[5px] w-[66px]" />
            <span className="ml-[4px] text-[#555]">°</span>
          </div>
          <div className="h-[2px]" />
        </div>
      </div>
      {/* status bar */}
      <div className="flex items-center h-[17px] shrink-0 bg-white border-t border-[#d8d8d8]">
        <div className="flex items-center w-[148px] h-full pl-[2px] border-r-2 border-[#e0e0e0]"><Mixed text="X=20608 Y=24934" /></div>
        <div className="flex items-center w-[79px] h-full pl-[2px] border-r-2 border-[#e0e0e0]"><Mixed text="层高:3m" /></div>
        <div className="flex items-center w-[101px] h-full pl-[3px] border-r-2 border-[#e0e0e0]"><Mixed text="底标高:4.47m" /></div>
        <div className="flex items-center w-[50px] h-full pl-[5px] border-r-2 border-[#e0e0e0]"><Mixed text="1(1)" /></div>
        <div className="flex items-center w-[918px] h-full pl-[3px] border-r-2 border-[#e0e0e0]"><Mixed text={'按鼠标左键指定第一个角点\uFF0C或拾取构件图元'} /></div>
        <div className="flex items-center h-full pl-[2px]"><Mixed text="541.4 FPS" /></div>
      </div>
      {/* small floating dialog */}
      <div className="absolute left-[1235px] top-[64px] flex flex-col w-[52px] h-[48px] bg-white shadow-[2px_3px_6px_rgba(0,0,0,0.45)]">
        <div className="flex items-center h-[24px] pl-[2px] text-[#aaa]">
          <span>Poi...</span>
          <div className="ml-auto mr-px w-[19px] h-[18px] bg-[#e4e4e4]" />
        </div>
        <div className="flex items-center justify-center flex-1 bg-[#f0f0f0] border border-[#555] border-b-2 border-r-2">开始</div>
      </div>
    </div>
  );
}
